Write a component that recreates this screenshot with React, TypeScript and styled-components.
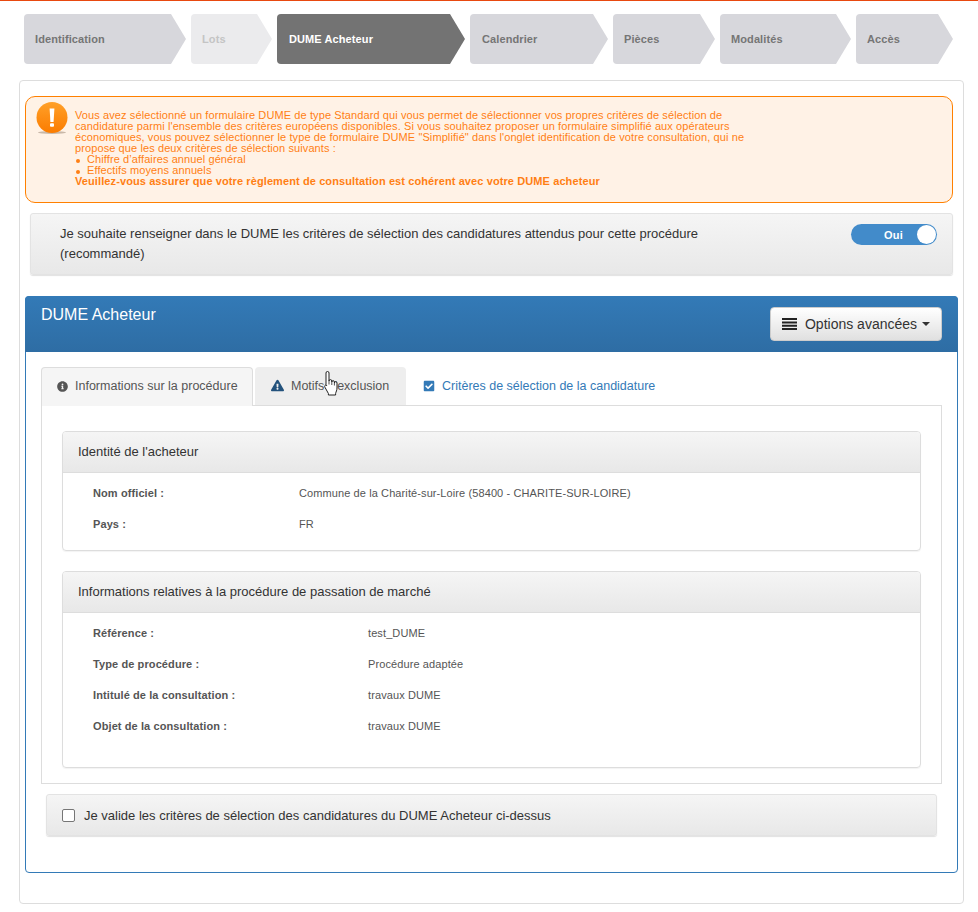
import React, { FunctionComponent } from 'react';
import styled, { createGlobalStyle } from 'styled-components';
import { FaInfoCircle, FaExclamationTriangle, FaCheckSquare } from 'react-icons/fa';

const GlobalStyle = createGlobalStyle`
	html, body {
		margin: 0;
		padding: 0;
		background: #fff;
	}
	body {
		font-family: "Liberation Sans", Arial, sans-serif;
		font-size: 13px;
		color: #333;
	}
`;

const Page = styled.div`
	position: relative;
	width: 978px;
	height: 912px;
	border-top: 1px solid #e8490f;
	box-sizing: border-box;
	overflow: hidden;
`;

const Steps = styled.ul`
	display: flex;
	gap: 5px;
	list-style: none;
	margin: 0;
	padding: 13px 0 0 24px;
`;

const Step = styled.li<{ $width: number; $state?: 'active' | 'disabled'; $inset?: number }>`
	box-sizing: border-box;
	width: ${props => props.$width}px;
	height: 50px;
	padding-left: ${props => props.$inset ?? 11}px;
	display: flex;
	align-items: center;
	font-size: 11px;
	font-weight: bold;
	letter-spacing: 0.1px;
	border-radius: 4px 0 0 4px;
	clip-path: polygon(0 0, calc(100% - 15px) 0, 100% 50%, calc(100% - 15px) 100%, 0 100%);
	background: ${props =>
		props.$state === 'active' ? '#737373' : props.$state === 'disabled' ? '#ebebed' : '#d7d7dc'};
	color: ${props =>
		props.$state === 'active' ? '#fff' : props.$state === 'disabled' ? '#c4c4c4' : '#757575'};
`;

const Card = styled.div`
	box-sizing: border-box;
	width: 945px;
	height: 824px;
	margin: 16px 0 0 19px;
	padding: 15px 5px 0;
	border: 1px solid #ddd;
	border-radius: 4px;
`;

const Alert = styled.div`
	box-sizing: border-box;
	width: 928px;
	height: 107px;
	display: flex;
	gap: 7px;
	padding: 5px 0 0 10px;
	border: 1px solid #ff8000;
	border-radius: 10px;
	background: #fff2e6;
	color: #ff7f14;
	font-size: 11px;
	line-height: 11px;
	letter-spacing: 0.1px;
`;

const AlertText = styled.div`
	padding-top: 8px;
	white-space: nowrap;
`;

const AlertList = styled.ul`
	margin: 0;
	padding: 0;
	list-style: none;

	li {
		padding-left: 12px;
		position: relative;
	}

	li::before {
		content: '';
		position: absolute;
		left: 1px;
		top: 5px;
		width: 4px;
		height: 4px;
		border-radius: 50%;
		background: #ff7f14;
	}
`;

const Well = styled.div`
	box-sizing: border-box;
	border: 1px solid #e3e3e3;
	border-radius: 3px;
	background: linear-gradient(to bottom, #f5f5f5, #e8e8e8);
	box-shadow: 0 1px 1px rgba(0, 0, 0, 0.12);
`;

const ToggleWell = styled(Well)`
	width: 923px;
	height: 62px;
	margin: 10px 0 0 5px;
	padding: 9px 15px 0 29px;
	display: flex;
	justify-content: space-between;
	align-items: flex-start;
	line-height: 20px;
`;

const ToggleLabel = styled.div`
	padding-top: 1px;
`;

const Toggle = styled.div`
	box-sizing: border-box;
	width: 86px;
	height: 21px;
	margin-top: 1px;
	padding-right: 1px;
	display: flex;
	align-items: center;
	justify-content: flex-end;
	gap: 14px;
	border-radius: 11px;
	background: #428bca;
	color: #fff;
	font-size: 11px;
	font-weight: bold;
	letter-spacing: 0.2px;

	&::after {
		content: '';
		width: 19px;
		height: 19px;
		border-radius: 50%;
		background: #fff;
	}
`;

const Panel = styled.section`
	box-sizing: border-box;
	width: 933px;
	height: 577px;
	margin-top: 21px;
	border: 1px solid #337ab7;
	border-radius: 4px;
`;

const PanelHeading = styled.header`
	box-sizing: border-box;
	height: 56px;
	margin: -1px -1px 0;
	padding: 10px 16px 0;
	display: flex;
	justify-content: space-between;
	background: linear-gradient(to bottom, #337ab7, #2e6da4);
	border-radius: 4px 4px 0 0;
	color: #fff;
	font-size: 16px;
	line-height: 18px;
`;

const OptionsButton = styled.button`
	box-sizing: border-box;
	width: 172px;
	height: 34px;
	margin-top: 1px;
	display: flex;
	align-items: center;
	justify-content: center;
	gap: 8px;
	padding: 0;
	border: 1px solid #ccc;
	border-radius: 4px;
	background: linear-gradient(to bottom, #fff, #e0e0e0);
	color: #333;
	font-family: inherit;
	font-size: 14px;
`;

const Caret = styled.span`
	display: inline-block;
	margin-left: -3px;
	border-top: 4px solid #333;
	border-left: 4px solid transparent;
	border-right: 4px solid transparent;
`;

const TabBar = styled.nav`
	display: flex;
	height: 39px;
	margin: 15px 15px 0;
	border-bottom: 1px solid #ddd;
	box-sizing: border-box;
`;

const Tab = styled.div<{ $variant: 'active' | 'muted' | 'link'; $width: number }>`
	box-sizing: border-box;
	width: ${props => props.$width}px;
	height: ${props => (props.$variant === 'active' ? 39 : 38)}px;
	margin-right: ${props => (props.$variant === 'active' ? 2 : 0)}px;
	display: flex;
	align-items: center;
	gap: 7px;
	padding: 0 0 2px ${props => (props.$variant === 'link' ? 16 : 15)}px;
	border-radius: 4px 4px 0 0;
	border: 1px solid ${props => (props.$variant === 'active' ? '#ddd' : 'transparent')};
	border-bottom: 0;
	background: ${props =>
		props.$variant === 'active' ? '#f5f5f5' : props.$variant === 'muted' ? '#eee' : 'transparent'};
	color: ${props => (props.$variant === 'link' ? '#337ab7' : '#555')};
	font-size: 12.5px;
	white-space: nowrap;

	svg {
		flex: none;
		color: ${props =>
			props.$variant === 'active' ? '#555' : props.$variant === 'muted' ? '#23527c' : '#337ab7'};
	}
`;

const TabContent = styled.div`
	box-sizing: border-box;
	height: 378px;
	margin: 0 15px;
	padding: 25px 20px 0;
	border: 1px solid #ddd;
	border-top: 0;
`;

const InfoPanel = styled.div<{ $height: number }>`
	box-sizing: border-box;
	height: ${props => props.$height}px;
	margin-bottom: 20px;
	border: 1px solid #ddd;
	border-radius: 4px;
	box-shadow: 0 1px 1px rgba(0, 0, 0, 0.05);
`;

const InfoHeading = styled.h3`
	box-sizing: border-box;
	height: 41px;
	margin: 0;
	padding: 0 15px 2px;
	display: flex;
	align-items: center;
	border-bottom: 1px solid #ddd;
	background: linear-gradient(to bottom, #f5f5f5, #e8e8e8);
	border-radius: 3px 3px 0 0;
	font-size: 13px;
	font-weight: normal;
	color: #333;
`;

const InfoBody = styled.dl<{ $labelWidth: number }>`
	display: grid;
	grid-template-columns: ${props => props.$labelWidth}px 1fr;
	grid-auto-rows: 31px;
	align-items: center;
	margin: 0;
	padding: 4px 0 0 30px;
	font-size: 11px;
	letter-spacing: 0.1px;
	color: #555;

	dt {
		font-weight: bold;
	}

	dd {
		margin: 0;
	}
`;

const ValidateWell = styled(Well)`
	width: 891px;
	height: 42px;
	margin: 10px 0 0 20px;
	padding: 0 15px;
	display: flex;
	align-items: center;
	gap: 9px;
`;

const CheckBox = styled.span`
	box-sizing: border-box;
	width: 13px;
	height: 13px;
	border: 1px solid #767676;
	border-radius: 2px;
	background: #fff;
`;

const Cursor = styled.svg`
	position: absolute;
	left: 324px;
	top: 370px;
`;

const AlertIcon = () => (
	<svg width="32" height="32" viewBox="0 0 32 32" style={{ flex: 'none' }}>
		<defs>
			<linearGradient id="alertFill" x1="0" y1="0" x2="0" y2="1">
				<stop offset="0" stopColor="#ffa029" />
				<stop offset="1" stopColor="#fb7c00" />
			</linearGradient>
		</defs>
		<ellipse cx="16" cy="30.5" rx="14" ry="1.5" fill="#c9b8a8" />
		<circle cx="16" cy="15.5" r="15.5" fill="url(#alertFill)" />
		<path d="M13.6 6.5h4.8l-.8 13.5h-3.2z" fill="#fff" />
		<rect x="14" y="21.2" width="4" height="3.6" rx="1" fill="#fff" />
	</svg>
);

const JustifyIcon = () => (
	<svg width="15" height="12" viewBox="0 0 15 12">
		<path d="M0 0h15v2H0zM0 3.4h15v2H0zM0 6.8h15v2H0zM0 10h15v2H0z" fill="#222" />
	</svg>
);

const STEPS = [
	{ label: 'Identification', width: 162 },
	{ label: 'Lots', width: 81, state: 'disabled' as const },
	{ label: 'DUME Acheteur', width: 188, state: 'active' as const, inset: 12 },
	{ label: 'Calendrier', width: 138, inset: 12 },
	{ label: 'Pièces', width: 102 },
	{ label: 'Modalités', width: 131 },
	{ label: 'Accès', width: 97 },
];

const App: FunctionComponent = () => {
	return (
		<Page>
			<GlobalStyle />
			<Steps>
				{STEPS.map(step => (
					<Step key={step.label} $width={step.width} $state={step.state} $inset={step.inset}>
						{step.label}
					</Step>
				))}
			</Steps>
			<Card>
				<Alert>
					<AlertIcon />
					<AlertText>
						Vous avez sélectionné un formulaire DUME de type Standard qui vous permet de sélectionner vos propres critères de sélection de
						<br />
						candidature parmi l'ensemble des critères européens disponibles. Si vous souhaitez proposer un formulaire simplifié aux opérateurs
						<br />
						économiques, vous pouvez sélectionner le type de formulaire DUME "Simplifié" dans l'onglet identification de votre consultation, qui ne
						<br />
						propose que les deux critères de sélection suivants :
						<AlertList>
							<li>Chiffre d’affaires annuel général</li>
							<li>Effectifs moyens annuels</li>
						</AlertList>
						<strong>Veuillez-vous assurer que votre règlement de consultation est cohérent avec votre DUME acheteur</strong>
					</AlertText>
				</Alert>
				<ToggleWell>
					<ToggleLabel>
						Je souhaite renseigner dans le DUME les critères de sélection des candidatures attendus pour cette procédure
						<br />
						(recommandé)
					</ToggleLabel>
					<Toggle>Oui</Toggle>
				</ToggleWell>
				<Panel>
					<PanelHeading>
						<span>DUME Acheteur</span>
						<OptionsButton>
							<JustifyIcon />
							Options avancées
							<Caret />
						</OptionsButton>
					</PanelHeading>
					<TabBar>
						<Tab $variant="active" $width={212}>
							<FaInfoCircle size={11} />
							Informations sur la procédure
						</Tab>
						<Tab $variant="muted" $width={151}>
							<FaExclamationTriangle size={13} />
							Motifs d'exclusion
						</Tab>
						<Tab $variant="link" $width={300}>
							<FaCheckSquare size={12} />
							Critères de sélection de la candidature
						</Tab>
					</TabBar>
					<TabContent>
						<InfoPanel $height={120}>
							<InfoHeading>Identité de l'acheteur</InfoHeading>
							<InfoBody $labelWidth={206}>
								<dt>Nom officiel :</dt>
								<dd>Commune de la Charité-sur-Loire (58400 - CHARITE-SUR-LOIRE)</dd>
								<dt>Pays :</dt>
								<dd>FR</dd>
							</InfoBody>
						</InfoPanel>
						<InfoPanel $height={197}>
							<InfoHeading>Informations relatives à la procédure de passation de marché</InfoHeading>
							<InfoBody $labelWidth={275}>
								<dt>Référence :</dt>
								<dd>test_DUME</dd>
								<dt>Type de procédure :</dt>
								<dd>Procédure adaptée</dd>
								<dt>Intitulé de la consultation :</dt>
								<dd>travaux DUME</dd>
								<dt>Objet de la consultation :</dt>
								<dd>travaux DUME</dd>
							</InfoBody>
						</InfoPanel>
					</TabContent>
					<ValidateWell>
						<CheckBox />
						Je valide les critères de sélection des candidatures du DUME Acheteur ci-dessus
					</ValidateWell>
				</Panel>
			</Card>
			<Cursor width="14" height="26" viewBox="0 0 14 26">
				<path
					d="M2 2a1.5 1.5 0 0 1 3 0v8a1.4 1.4 0 0 1 2.8 0v1a1.3 1.3 0 0 1 2.6 0v1a1.3 1.3 0 0 1 2.6 0v5c0 2.4-1 3.6-1.4 5.5v1.5H4.4v-1.5L.9 16.2c-.9-1.6.9-2.9 1.9-1.5l-.8-1z"
					fill="#fff"
					stroke="#222"
					strokeWidth="1"
					strokeLinejoin="round"
				/>
				<path d="M5 10v3.5M7.8 11v3M10.4 12v2.5" fill="none" stroke="#222" strokeWidth=".8" />
			</Cursor>
		</Page>
	);
};

export default App;
